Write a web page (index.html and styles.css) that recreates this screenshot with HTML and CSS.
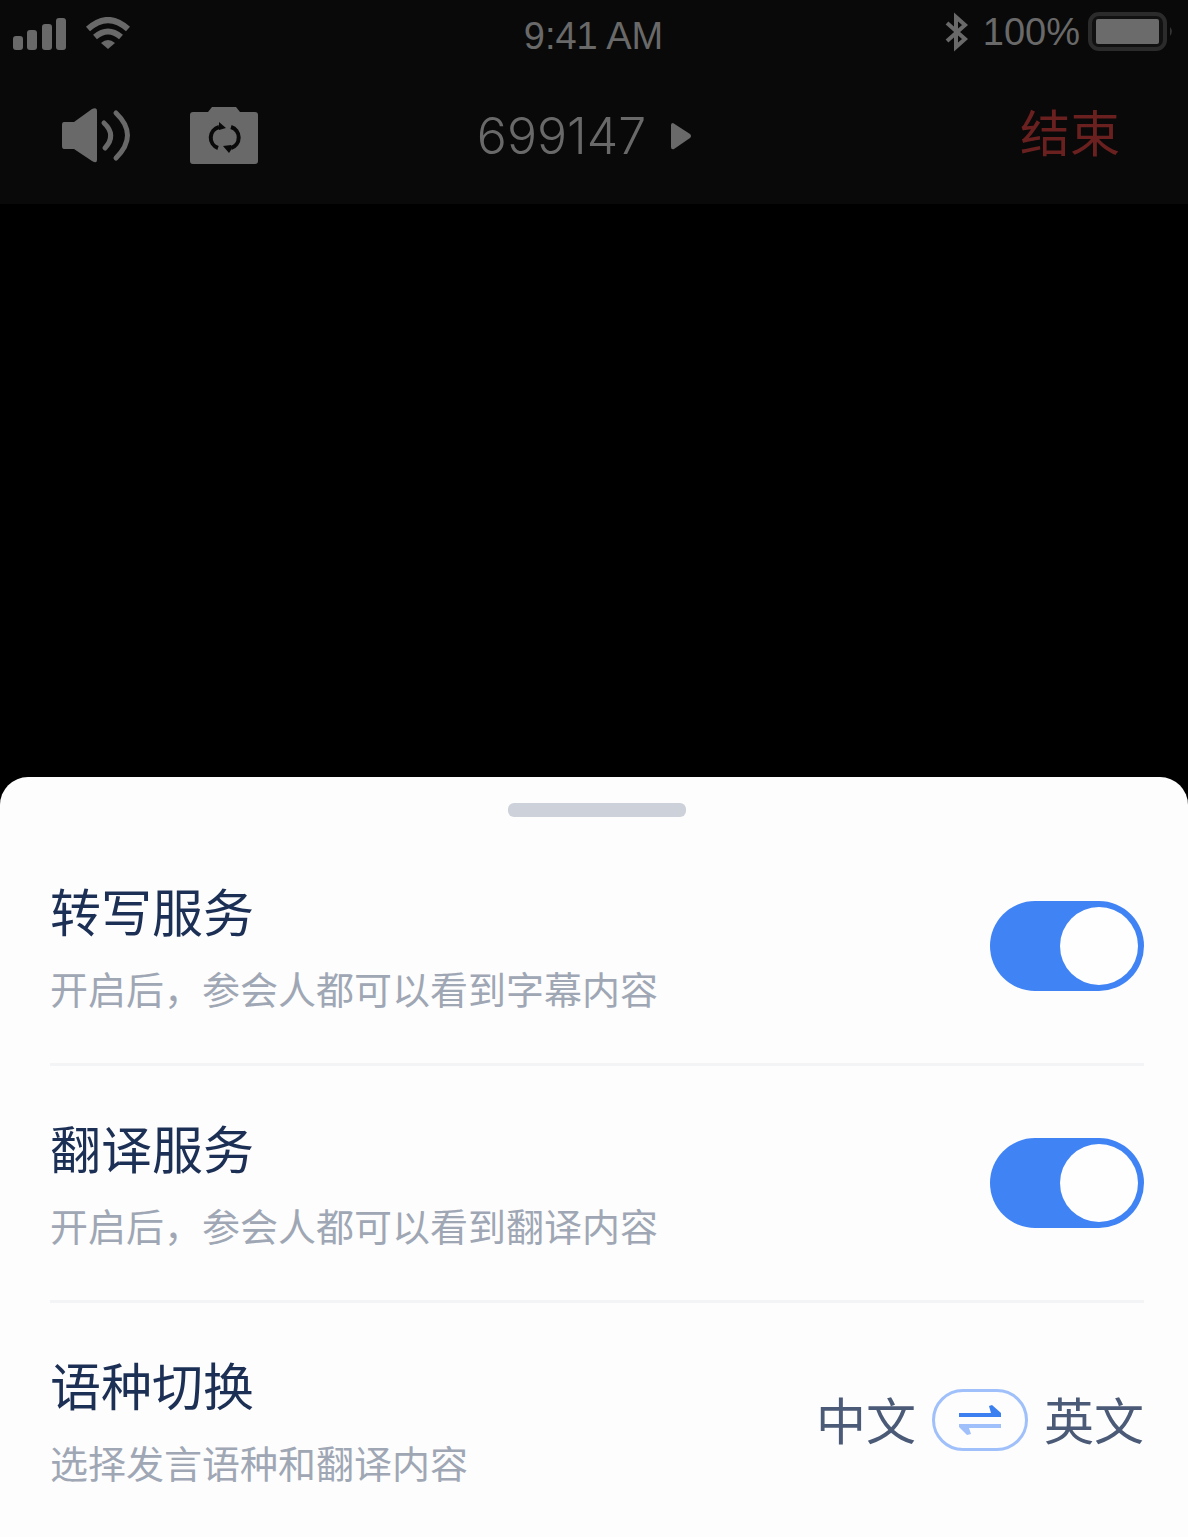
FILE: index.html
```html
<!DOCTYPE html>
<html lang="zh-CN">
<head>
<meta charset="utf-8">
<meta name="viewport" content="width=device-width, initial-scale=1">
<title>会议 699147</title>
<link rel="stylesheet" href="styles.css">
</head>
<body>
<div class="app">
  <header class="top">
    <div class="status">
      <div class="status-side">
        <svg width="54" height="34" viewBox="0 0 54 34" fill="currentColor" aria-hidden="true"><rect x="0" y="19" width="10" height="14" rx="3"/><rect x="14" y="13" width="10" height="20" rx="3"/><rect x="29" y="7" width="10" height="26" rx="3"/><rect x="43" y="1" width="10" height="32" rx="3"/></svg>
        <svg width="46" height="34" viewBox="0 0 46 34" aria-hidden="true"><g fill="none" stroke="currentColor" stroke-width="6"><path d="M3 12Q23-6 43 12"/><path d="M10 20Q23 9 36 20"/></g><path d="M16 26Q23 20 30 26L23 32Z" fill="currentColor"/></svg>
      </div>
      <time class="clock">9:41 AM</time>
      <div class="status-side status-right">
        <svg width="30" height="40" viewBox="0 0 30 40" fill="none" stroke="currentColor" stroke-width="4" aria-hidden="true"><path d="M2 11L20 27L11 35V5L20 13L2 29"/></svg>
        <span class="percent">100%</span>
        <svg width="86" height="40" viewBox="0 0 86 40" aria-hidden="true"><rect x="2" y="2" width="75" height="35" rx="9" fill="#111" stroke="#2b2b2b" stroke-width="4"/><rect x="8" y="7" width="63" height="25" rx="2" fill="#6b6b6b"/><path d="M82 15Q86 19 82 24Z" fill="#333"/></svg>
      </div>
    </div>
    <nav class="nav">
      <div class="nav-left">
        <button type="button" aria-label="扬声器"><svg width="70" height="60" viewBox="0 0 70 60" aria-hidden="true"><path d="M3 16H13L31 3Q36 1 36 5V54Q36 58 31 55L13 43H3Q1 43 1 40V19Q1 16 3 16Z" fill="currentColor"/><g fill="none" stroke="currentColor" stroke-width="5" stroke-linecap="round"><path d="M43 17Q56 29 44 42"/><path d="M55 7Q78 29 55 52"/></g></svg></button>
        <button type="button" aria-label="切换摄像头"><svg width="70" height="60" viewBox="0 0 70 60" aria-hidden="true"><path d="M4 6H19L23 1H47L51 6H66Q69 6 69 9V55Q69 58 66 58H4Q1 58 1 55V9Q1 6 4 6Z" fill="currentColor"/><g fill="none" stroke="#090909" stroke-width="4"><path d="M29 42A11 11 0 0 1 30 21"/><path d="M42 21A11 11 0 0 1 42 42"/></g><path d="M30 16L37 22L30 24ZM42 39V44L40 47L34 40Z" fill="#090909"/></svg></button>
      </div>
      <button class="meeting" type="button"><span>699147</span><svg width="22" height="28" viewBox="0 0 22 28" aria-hidden="true"><path d="M3 1L20 12Q22 14 20 16L4 27Q1 28 1 25V3Q1 1 3 1Z" fill="currentColor"/></svg></button>
      <button class="end" type="button">结束</button>
    </nav>
  </header>

  <main class="video"></main>

  <section class="sheet">
    <div class="handle"></div>
    <div class="row">
      <div class="copy">
        <label class="title" for="transcribe">转写服务</label>
        <p class="hint">开启后，参会人都可以看到字幕内容</p>
      </div>
      <input class="switch" id="transcribe" type="checkbox" role="switch" checked>
    </div>
    <div class="row">
      <div class="copy">
        <label class="title" for="translate">翻译服务</label>
        <p class="hint">开启后，参会人都可以看到翻译内容</p>
      </div>
      <input class="switch" id="translate" type="checkbox" role="switch" checked>
    </div>
    <div class="row">
      <div class="copy">
        <h2 class="title">语种切换</h2>
        <p class="hint">选择发言语种和翻译内容</p>
      </div>
      <div class="languages">
        <span class="language">中文</span>
        <button class="swap" type="button" aria-label="互换语种"><svg width="44" height="32" viewBox="0 0 44 32" aria-hidden="true"><path d="M1 9H33L31 2L34 1L43 9V13H1Z" fill="#3c7ff0"/><path d="M43 24H11L13 30L9 31L1 23V20H43Z" fill="#9fc0fa"/></svg></button>
        <span class="language">英文</span>
      </div>
    </div>
  </section>
</div>
</body>
</html>
```
FILE: styles.css
```css
* {
  box-sizing: border-box;
}

body {
  margin: 0;
  background: #000;
  font-family: "Liberation Sans", "Noto Sans CJK SC", sans-serif;
}

button {
  padding: 0;
  border: 0;
  background: none;
  color: inherit;
  font: inherit;
}

svg {
  display: block;
}

.app {
  display: flex;
  flex-direction: column;
  min-height: 100vh;
}

.top {
  background: #090909;
  color: #696969;
}

.status,
.nav {
  display: grid;
  grid-template-columns: 1fr auto 1fr;
  align-items: center;
}

.status {
  height: 68px;
  padding: 0 14px 0 13px;
  font-size: 38px;
}

.status-side {
  display: flex;
  align-items: center;
  gap: 18px;
}

.status-right {
  justify-content: flex-end;
  gap: 8px;
  padding-bottom: 4px;
}

.clock {
  padding-top: 4px;
}

.nav {
  height: 136px;
  padding: 0 68px 0 61px;
}

.nav-left {
  display: flex;
  gap: 58px;
}

.meeting {
  display: flex;
  align-items: center;
  gap: 24px;
  padding-right: 12px;
  font-family: Inter, "Liberation Sans", sans-serif;
  font-size: 50px;
  font-weight: 300;
}

.end {
  justify-self: end;
  padding-bottom: 12px;
  color: #6b2020;
  font-size: 50px;
}

.video {
  flex: 1;
  min-height: 320px;
}

.sheet {
  padding: 26px 44px 0 50px;
  border-radius: 28px 28px 0 0;
  background: #fdfdfd;
}

.handle {
  width: 178px;
  height: 14px;
  margin: 0 auto 12px;
  border-radius: 6px;
  background: #cdd1d9;
}

.row {
  display: flex;
  align-items: center;
  justify-content: space-between;
  gap: 32px;
  padding: 44px 0;
  border-bottom: 3px solid #f3f4f6;
}

.row:last-child {
  border-bottom: 0;
}

.copy {
  padding-top: 6px;
}

.title {
  display: block;
  margin: 0 0 12px;
  color: #1c2f55;
  font-size: 51px;
  font-weight: 400;
  line-height: 72px;
}

.hint {
  margin: 0;
  color: #9fa7b5;
  font-size: 38px;
  line-height: 56px;
}

.switch {
  flex: none;
  appearance: none;
  display: flex;
  justify-content: flex-end;
  width: 154px;
  height: 90px;
  margin: 0;
  padding: 6px;
  border-radius: 45px;
  background: #4083f5;
}

.switch::before {
  content: "";
  width: 78px;
  height: 78px;
  border-radius: 50%;
  background: #fefefe;
}

.switch:not(:checked) {
  justify-content: flex-start;
  background: #cdd1d9;
}

.languages {
  display: flex;
  align-items: center;
  gap: 16px;
  color: #4b5a77;
  font-size: 50px;
}

.language {
  padding-bottom: 4px;
}

.swap {
  display: grid;
  place-items: center;
  width: 96px;
  height: 62px;
  border: 3px solid #9fc0fa;
  border-radius: 31px;
}
```
